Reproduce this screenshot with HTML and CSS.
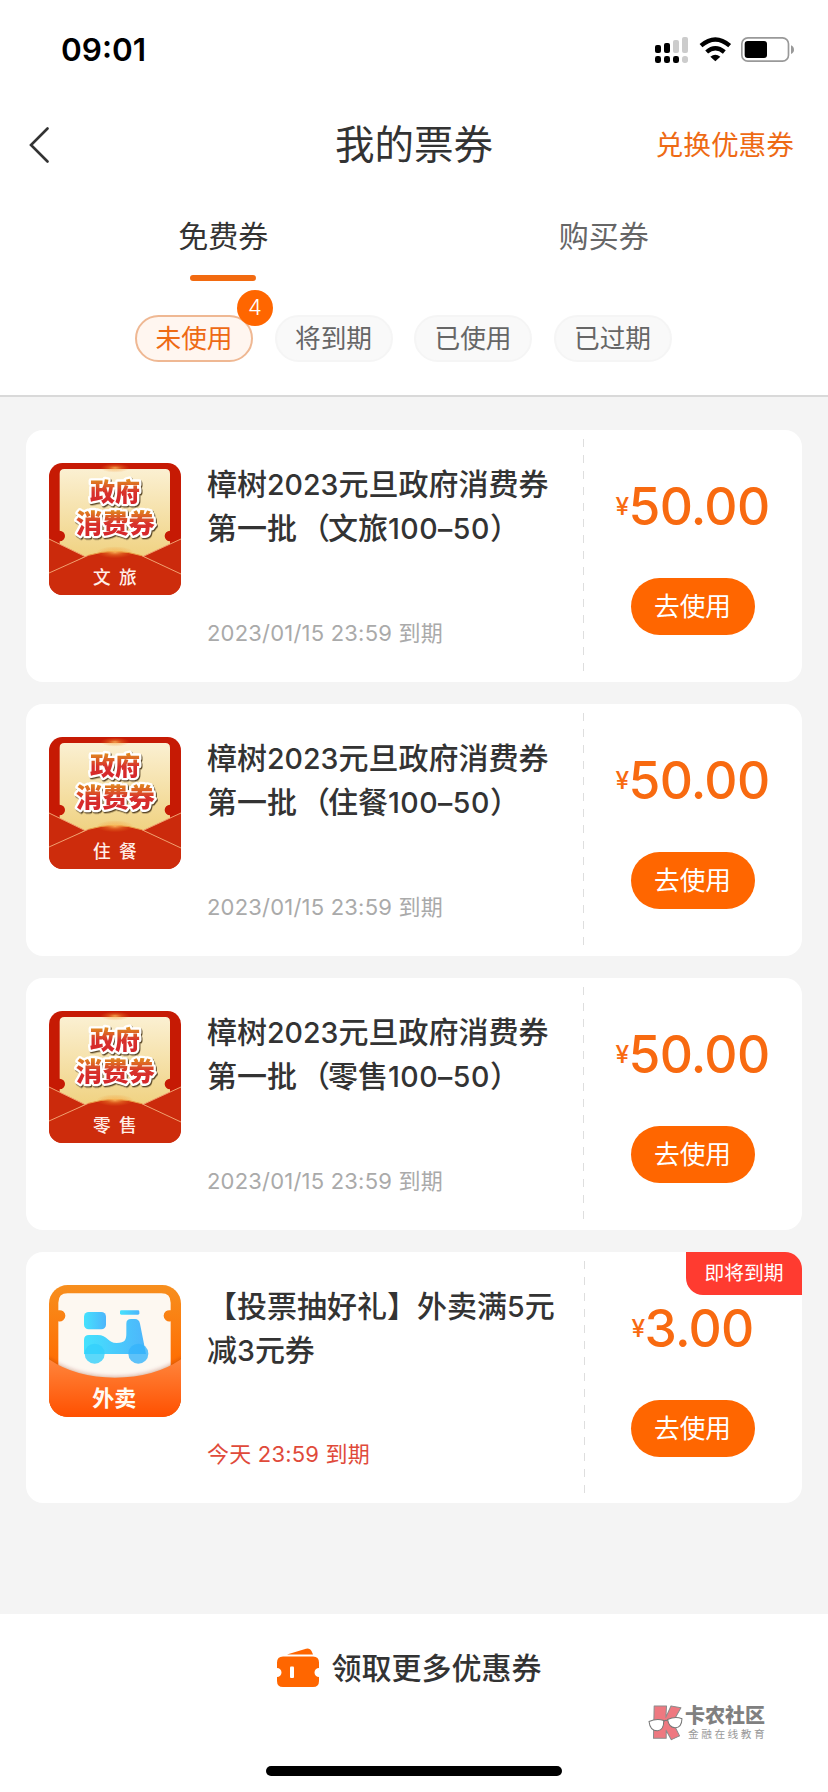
FILE: index.html
```html
<!DOCTYPE html>
<html lang="zh-CN">
<head>
<meta charset="utf-8">
<title>我的票券</title>
<link rel="stylesheet" href="styles.css">
</head>
<body>
<svg class="defs" width="0" height="0" aria-hidden="true">
  <defs>
    <linearGradient id="paper" x1="0" y1="0" x2="0" y2="1"><stop offset="0" stop-color="#fbf0d2"/><stop offset="1" stop-color="#efd07c"/></linearGradient>
    <linearGradient id="ink" x1="0" y1="0" x2="0" y2="1"><stop offset="0.2" stop-color="#e08a1e"/><stop offset="0.55" stop-color="#d8322c"/><stop offset="1" stop-color="#d4202a"/></linearGradient>
    <radialGradient id="glow"><stop offset="0" stop-color="#ffc766" stop-opacity=".8"/><stop offset="0.45" stop-color="#f7a13a" stop-opacity="0.35"/><stop offset="1" stop-color="#f08020" stop-opacity="0"/></radialGradient>
    <linearGradient id="frame" x1="0" y1="0" x2="0" y2="1"><stop offset="0" stop-color="#f78f1e"/><stop offset="0.65" stop-color="#ff6a00"/></linearGradient>
    <linearGradient id="pocket" x1="0" y1="0" x2="0" y2="1"><stop offset="0" stop-color="#ff853c"/><stop offset="1" stop-color="#ff5000"/></linearGradient>
    <linearGradient id="sky" x1="0" y1="0" x2="1" y2="0"><stop offset="0" stop-color="#45e2fd"/><stop offset="1" stop-color="#4db5fb"/></linearGradient>
    <filter id="soft" x="-10%" y="-30%" width="120%" height="160%"><feGaussianBlur stdDeviation="7"/></filter>
    <clipPath id="tile"><rect width="396" height="396" rx="40"/></clipPath>
    <clipPath id="tile2"><rect width="396" height="396" rx="56"/></clipPath>
    <symbol id="envelope" viewBox="0 0 396 396">
      <g clip-path="url(#tile)">
        <rect width="396" height="396" fill="#c61a04"/>
        <path d="M46 18H349Q363 18 363 32V203A16 16 0 1 0 363 235V300H32V235A16 16 0 1 0 32 203V32Q32 18 46 18Z" fill="url(#paper)"/>
        <path d="M0 228L107 280L0 340Z" fill="#cb2a0c"/><path d="M396 228L283 280L396 340Z" fill="#cb2a0c"/>
        <path d="M0 228L107 280M396 228L283 280" stroke="#f0a070" stroke-width="3"/>
        <path d="M0 330L118 277Q198 253 278 278L396 333V396H0Z" fill="#cd2c0c"/>
        <path d="M0 330L118 277M278 278L396 333" stroke="#f0a070" stroke-width="3"/>
        <path d="M118 277Q198 253 278 278" fill="none" stroke="#e9a04a" stroke-width="3"/>
        <ellipse cx="198" cy="268" rx="56" ry="18" fill="url(#glow)"/>
        <ellipse cx="198" cy="15" rx="44" ry="14" fill="url(#glow)"/>
      </g>
    </symbol>
  </defs>
</svg>
<div class="screen">
  <header class="top">
    <div class="status">
      <span class="clock">09:01</span>
      <svg class="status-icons" viewBox="720 108 423 84">
        <g fill="#000"><rect x="723" y="135" width="18" height="24" rx="6"/><rect x="750" y="129" width="18" height="30" rx="6"/><rect x="723" y="168" width="18" height="21" rx="7"/><rect x="750" y="168" width="18" height="21" rx="7"/><rect x="777" y="168" width="18" height="21" rx="7"/></g>
        <g fill="#ccc"><rect x="777" y="120" width="18" height="39" rx="6"/><rect x="804" y="111" width="18" height="48" rx="6"/><rect x="804" y="168" width="18" height="21" rx="8"/></g>
        <g fill="none" stroke="#000" stroke-width="13"><path d="M861 137Q904 100 947 137"/><path d="M878 156Q904 133 931 156"/></g>
        <path d="M889 170Q904 159 919 170L904 184Z"/>
        <rect x="983.500" y="113.500" width="140" height="70" rx="18" fill="#fff" stroke="#999" stroke-width="5"/>
        <rect x="992" y="123" width="67" height="51" rx="9"/>
        <path d="M1131 136Q1140 140 1140 149Q1140 158 1131 162Z" fill="#999"/>
      </svg>
    </div>
    <nav class="navbar">
      <svg class="back" viewBox="0 0 20 36"><path d="M18.500 1.500L2 18L18.500 34.500" fill="none" stroke="#333" stroke-width="2.600" stroke-linecap="round"/></svg>
      <h1 class="page-title">我的票券</h1>
      <a class="redeem">兑换优惠券</a>
    </nav>
    <div class="tabs">
      <div class="tab tab-active">免费券</div>
      <div class="tab">购买券</div>
    </div>
    <div class="chips">
      <div class="chip chip-active">未使用<span class="count">4</span></div>
      <div class="chip">将到期</div>
      <div class="chip">已使用</div>
      <div class="chip">已过期</div>
    </div>
  </header>
  <main class="list">
    <article class="card">
      <svg class="thumb" viewBox="0 0 396 396"><use href="#envelope"/>
        <g class="stamp"><text x="198" y="115" font-size="75">政府</text><text x="199" y="210" font-size="79">消费券</text></g>
        <text class="kind" x="210" y="363">文旅</text></svg>
      <div class="info"><h2 class="name">樟树<span class="num">2023</span>元旦政府消费券<br>第一批<span class="open">（</span>文旅<span class="num amount">100–50</span>）</h2><p class="due">2023/01/15 23:59 到期</p></div>
      <div class="side"><div class="price"><span class="yen">¥</span>50.00</div><a class="use">去使用</a></div>
    </article>
    <article class="card">
      <svg class="thumb" viewBox="0 0 396 396"><use href="#envelope"/>
        <g class="stamp"><text x="198" y="115" font-size="75">政府</text><text x="199" y="210" font-size="79">消费券</text></g>
        <text class="kind" x="210" y="363">住餐</text></svg>
      <div class="info"><h2 class="name">樟树<span class="num">2023</span>元旦政府消费券<br>第一批<span class="open">（</span>住餐<span class="num amount">100–50</span>）</h2><p class="due">2023/01/15 23:59 到期</p></div>
      <div class="side"><div class="price"><span class="yen">¥</span>50.00</div><a class="use">去使用</a></div>
    </article>
    <article class="card">
      <svg class="thumb" viewBox="0 0 396 396"><use href="#envelope"/>
        <g class="stamp"><text x="198" y="115" font-size="75">政府</text><text x="199" y="210" font-size="79">消费券</text></g>
        <text class="kind" x="210" y="363">零售</text></svg>
      <div class="info"><h2 class="name">樟树<span class="num">2023</span>元旦政府消费券<br>第一批<span class="open">（</span>零售<span class="num amount">100–50</span>）</h2><p class="due">2023/01/15 23:59 到期</p></div>
      <div class="side"><div class="price"><span class="yen">¥</span>50.00</div><a class="use">去使用</a></div>
    </article>
    <article class="card card-last">
      <svg class="thumb" viewBox="0 0 396 396">
        <g clip-path="url(#tile2)">
          <rect width="396" height="396" fill="url(#frame)"/>
          <path d="M56 25H337Q365 25 365 53V76A17 17 0 1 0 365 109V300H28V109A17 17 0 1 0 28 76V53Q28 25 56 25Z" fill="#fdf8f1"/>
          <g fill="url(#sky)"><rect x="105" y="81" width="66" height="52" rx="14"/><rect x="213" y="76" width="58" height="13" rx="4"/>
          <path d="M105 165Q105 150 120 150H146C176 150 176 174 203 174C229 174 232 164 232 144V116Q232 102 246 102H258Q270 102 273 116L291 207H105Z"/></g>
          <circle cx="137" cy="206" r="30" fill="#33d0fb" fill-opacity=".8"/><circle cx="268" cy="206" r="30" fill="#35b4fb" fill-opacity=".8"/>
          <path d="M-10 215Q80 276 198 276T406 215V396H-10Z" fill="#8b2a10" fill-opacity=".4" filter="url(#soft)"/>
          <path d="M0 223Q80 278 198 278T396 223V396H0Z" fill="url(#pocket)"/>
        </g>
        <text class="takeout" x="196" y="364">外卖</text></svg>
      <div class="info"><h2 class="name">【投票抽好礼】外卖满<span class="num">5</span>元<br>减<span class="num">3</span>元券</h2><p class="due due-soon">今天 23:59 到期</p></div>
      <div class="side"><div class="price"><span class="yen">¥</span>3.00</div><a class="use">去使用</a></div>
      <span class="ribbon">即将到期</span>
    </article>
  </main>
  <footer class="bottom">
    <a class="more">
      <svg class="wallet" viewBox="0 0 42 40"><path d="M10 6.500L29 0.700Q33-0.500 34.500 3L36 6.500Z" fill="#ff6600"/><path d="M6 8.500H36Q42 8.500 42 14.500V20A4.500 4.500 0 0 0 42 29V33Q42 39 36 39H6Q0 39 0 33V29A4.500 4.500 0 0 0 0 20V14.500Q0 8.500 6 8.500Z" fill="#ff6600"/><rect x="13" y="18.500" width="4" height="11.500" rx="1" fill="#fff"/></svg>
      <span>领取更多优惠券</span>
    </a>
    <div class="home-bar"></div>
    <div class="watermark">
      <svg class="mark" viewBox="0 0 102 106"><g fill="#ee7880" stroke="#8c8c8c" stroke-width="3" stroke-linejoin="round"><path d="M18 5H54L52 38L67 5L96 10L72 52L92 92L68 103L53 76V99H16Z"/></g><g fill="#fff" stroke="#777" stroke-width="3"><path d="M3 50Q25 40 46 47Q46 76 28 77Q6 78 3 50Z"/><path d="M57 44Q80 34 99 42Q98 68 80 68Q61 69 57 44Z"/><path d="M46 50Q52 44 57 48" fill="none"/></g></svg>
      <div class="mark-text"><b class="mark-name">卡农社区</b><span class="mark-sub">金融在线教育</span></div>
    </div>
  </footer>
</div>
</body>
</html>
```
FILE: styles.css
```css
* { box-sizing: border-box; }
body { margin: 0; background: #f4f4f4; color: #333; font-family: Inter, "Noto Sans CJK SC", sans-serif; }
h1, h2, p { margin: 0; font-weight: 400; }
.defs { display: block; height: 0; }
.screen { width: 828px; height: 1792px; display: flex; flex-direction: column; overflow: hidden; }

.top { height: 397px; background: #fff; border-bottom: 2px solid #d9d9d9; }
.status { height: 99px; padding: 0 33px 0 61px; display: flex; align-items: center; justify-content: space-between; }
.clock { font-size: 31.5px; font-weight: 600; color: #000; }
.status-icons { width: 141px; height: 28px; }
.navbar { height: 91px; padding: 0 34px 0 34px; display: grid; grid-template-columns: 1fr auto 1fr; align-items: center; }
.back { width: 20px; height: 36px; margin-left: -5px; }
.page-title { font-size: 39.5px; line-height: 60px; font-weight: 400; }
.redeem { justify-self: end; font-size: 27.7px; line-height: 40px; color: #ee6a14; }
.tabs { height: 91px; padding: 0 34px 0 33px; display: flex; }
.tab { flex: 1; display: flex; flex-direction: column; align-items: center; font-size: 30px; line-height: 44px; padding-top: 24px; color: #666; }
.tab-active { color: #333; justify-content: space-between; }
.tab-active::after { content: ""; width: 66px; height: 6px; border-radius: 3px; background: #f26a10; }
.chips { display: flex; gap: 21.500px; padding: 34px 0 0 135px; }
.chip { position: relative; width: 118px; height: 47px; border: 2px solid #f5f5f5; border-radius: 24px; background: #f9f9f9; font-size: 25.7px; line-height: 43px; text-align: center; color: #666; }
.chip-active { background: #fff6f0; border-color: #efb893; color: #ee6a14; }
.count { position: absolute; left: 100px; top: -27px; width: 36px; height: 36px; border-radius: 50%; background: #ff6600; color: #fff; font-size: 22px; line-height: 35px; font-weight: 300; }

.list { flex: 1; padding: 33px 26px 0; display: flex; flex-direction: column; gap: 22px; }
.card { position: relative; height: 252px; border-radius: 17px; background: #fff; padding-left: 23px; display: flex; }
.card-last { height: 251px; }
.thumb { width: 132px; height: 132px; margin-top: 33px; flex: none; font-family: "Noto Sans CJK SC", sans-serif; text-anchor: middle; }
.stamp { font-weight: 900; fill: url(#ink); stroke: #fff; stroke-width: 14px; stroke-linejoin: round; paint-order: stroke; filter: drop-shadow(3px 4px 0 #5c4a2a); }
.kind { font-size: 53px; font-weight: 500; letter-spacing: 25px; fill: #ffeee8; }
.takeout { font-size: 66px; font-weight: 700; fill: #fffaf2; }
.info { width: 376px; margin-left: 26px; padding: 32px 0 33px; display: flex; flex-direction: column; justify-content: space-between; }
.name { font-size: 30px; line-height: 44px; font-weight: 500; white-space: nowrap; }
.num { font-size: 28.500px; line-height: 1; }
.open { margin-left: 3px; margin-right: -2px; }
.amount { letter-spacing: 0.5px; }
.due { font-size: 22px; line-height: 32px; color: #aaa; font-weight: 400; letter-spacing: 0.2px; white-space: nowrap; }
.due-soon { color: #e04a3a; }
.side { position: relative; flex: 1; display: flex; flex-direction: column; align-items: center; }
.side::before { content: ""; position: absolute; left: 0; top: 9px; bottom: 9px; width: 1px; background: repeating-linear-gradient(#dedede 0 8px, transparent 8px 16px); }
.card-last .side::before { left: 1px; }
.price { margin-top: 44px; height: 64px; font-size: 51.500px; line-height: 64px; font-weight: 500; color: #f86a10; display: flex; align-items: center; letter-spacing: -0.7px; }
.yen { font-size: 24.500px; line-height: 62px; margin-right: 0; }
.use { width: 124px; height: 57px; margin-top: 40px; border-radius: 28.500px; background: #ff6600; color: #fff; font-size: 25.7px; line-height: 57px; font-weight: 400; text-align: center; }
.ribbon { position: absolute; right: 0; top: 0; width: 116px; height: 43px; border-radius: 0 17px 0 17px; background: #ff3b30; color: #fff; font-size: 19.800px; line-height: 43px; font-weight: 400; text-align: center; }

.bottom { position: relative; height: 178px; background: #fff; display: flex; flex-direction: column; align-items: center; justify-content: space-between; padding: 32px 0 16px; }
.more { display: flex; align-items: center; gap: 13px; font-size: 30px; line-height: 44px; font-weight: 500; margin-right: 10px; }
.wallet { width: 42px; height: 40px; }
.home-bar { width: 296px; height: 10px; border-radius: 5px; background: #000; }
.watermark { position: absolute; left: 648px; top: 90px; display: flex; gap: 2px; }
.mark { width: 35px; height: 37px; }
.mark-text { display: flex; flex-direction: column; color: #808080; }
.mark-name { font-size: 20px; line-height: 24px; font-weight: 900; }
.mark-sub { font-size: 10.700px; line-height: 13px; letter-spacing: 2.500px; padding-left: 3px; color: #999; }
```
